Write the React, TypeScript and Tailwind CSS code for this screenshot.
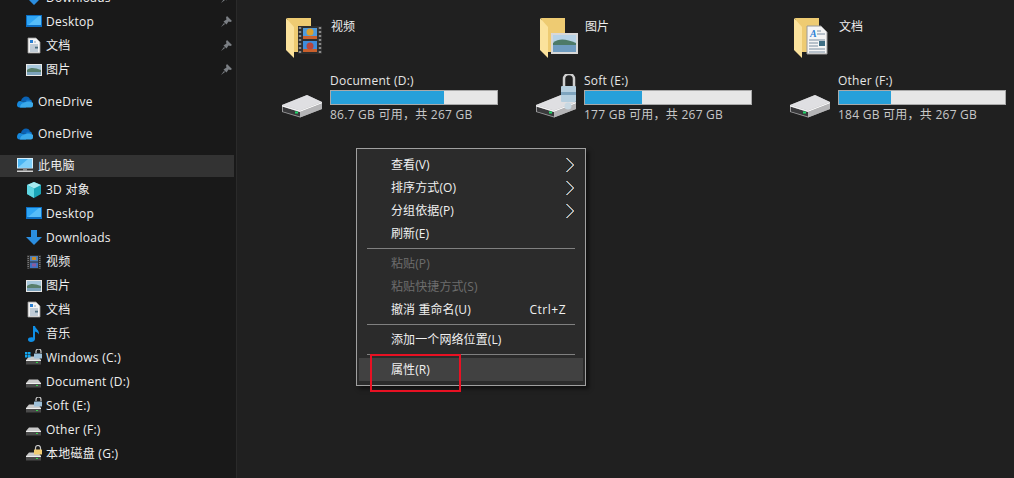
import type { ReactNode } from "react";

const DriveSmall = () => (
  <>
    <path d="M1 10 L4 6.5 H13 L16 10 V14 H1 Z" fill="#c9c9c9" />
    <path d="M1 10.5 H16 V14.5 H1 Z" fill="#4a4a4a" />
    <rect x="1" y="10" width="15" height="1" fill="#eeeeee" />
    <rect x="11" y="12" width="2" height="1" fill="#35d04a" />
  </>
);

const SmallLock = ({ color = "#9fc0d8", closed = false }: { color?: string; closed?: boolean }) => (
  <>
    <path
      d={closed ? "M10.5 5 V3 A2.5 2.5 0 0 1 15.5 3 V5" : "M11 4 V2.5 A2.5 2.5 0 0 1 16 2.5 V4"}
      fill="none"
      stroke="#c8c8c8"
      strokeWidth="1.2"
    />
    <rect x="9" y="4.5" width="8" height="5" rx="0.5" fill={color} />
  </>
);

const icons: Record<string, ReactNode> = {
  desktop: (
    <>
      <rect x="1" y="2" width="16" height="12" fill="#0c6fc4" />
      <rect x="2" y="3" width="14" height="9" fill="#2fa6f5" />
      <path d="M3 12 L14 3 H16 V12 Z" fill="#56bdf9" />
    </>
  ),
  doc: (
    <>
      <path d="M3 1 H11 L15 5 V16 H3 Z" fill="#f4f4f4" stroke="#9a9a9a" strokeWidth="0.8" />
      <rect x="5" y="3" width="3" height="3" fill="#2a7fd1" />
      <path d="M9 5 H11 M5 8 H13 M5 10 H10 M5 12 H13 M5 14 H13" stroke="#6f8ea8" strokeWidth="0.8" />
      <rect x="10" y="9.5" width="3" height="2" fill="#4a6d80" />
    </>
  ),
  picture: (
    <>
      <rect x="1" y="3" width="16" height="12" fill="#e8e8e8" />
      <rect x="2" y="4" width="14" height="10" fill="#a8c8dc" />
      <path d="M2 9 C6 6 10 7 16 9 V11 H2 Z" fill="#587f6c" />
      <rect x="2" y="11" width="14" height="3" fill="#7da3bc" />
    </>
  ),
  video: (
    <>
      <rect x="2" y="2" width="14" height="14" fill="#2f2f2f" />
      <rect x="5" y="3" width="8" height="5.5" fill="#4f7fb8" />
      <rect x="5" y="9.5" width="8" height="5.5" fill="#3f72c2" />
      <rect x="7" y="4" width="4" height="3" fill="#c48a2a" />
      <rect x="7" y="10.5" width="4" height="3" fill="#8c5a9c" />
      <path d="M3.2 3 V15.5 M14.8 3 V15.5" stroke="#8a8a8a" strokeWidth="1.2" strokeDasharray="1 1" />
    </>
  ),
  music: (
    <path
      d="M8 1 H10 C10.5 4 14.5 5 14 9.5 C13 7.5 11.5 7 10 6.5 V14 C10 16 8 17 6 17 C4 17 3 16 3 14.5 C3 13 5 12 8 12.5 Z"
      fill="#0f8fe6"
    />
  ),
  cube: (
    <>
      <path d="M9 1 L16 4 V13 L9 17 L2 13 V4 Z" fill="#1aa5b8" />
      <path d="M9 1 L16 4 L9 7.5 L2 4 Z" fill="#a8ecf2" />
      <path d="M2 4 L9 7.5 V17 L2 13 Z" fill="#5fd6e2" />
    </>
  ),
  download: <path d="M6 1 H12 V8 H17 L9 16 L1 8 H6 Z" fill="#2b8ee0" />,
  onedrive: (
    <>
      <path d="M4 8 C5 3 11 2 13 6 C11 7 9 8 8 9 Z" fill="#0a62b4" />
      <path d="M8 9 C10 5 15 6 15 9 L8 11 Z" fill="#0f75cc" />
      <path d="M3 8 C1 8 0 10 0 12 C0 13.5 1 14.5 2.5 14.5 H9 L8 9 Z" fill="#1688dc" />
      <path d="M7 10 C9 8 14 8 16 10 V12.5 C16 13.8 15 14.5 14 14.5 H3 C3 12 5 10 7 10 Z" fill="#3aa9ea" />
    </>
  ),
  pc: (
    <>
      <rect x="0" y="1" width="16" height="10.5" fill="#d7eefb" />
      <rect x="1" y="2" width="14" height="8.5" fill="#49b4f2" />
      <path d="M1 10.5 L11 2 H15 V10.5 Z" fill="#7fd0fa" />
      <rect x="6" y="11.5" width="4" height="2" fill="#8a8a8a" />
      <rect x="0" y="13.5" width="16" height="1.5" fill="#cfcfcf" />
    </>
  ),
  win: (
    <>
      <g transform="translate(0 1)">
        <DriveSmall />
      </g>
      <SmallLock />
      <path d="M0 3 H2.5 V5.5 H0 Z M3 3 H5.5 V5.5 H3 Z M0 6 H2.5 V8.5 H0 Z M3 6 H5.5 V8.5 H3 Z" fill="#12a5ee" />
    </>
  ),
  drive: <DriveSmall />,
  driveOpen: (
    <>
      <g transform="translate(0 1)">
        <DriveSmall />
      </g>
      <SmallLock />
    </>
  ),
  driveClosed: (
    <>
      <g transform="translate(0 1)">
        <DriveSmall />
      </g>
      <SmallLock color="#f1cd74" closed />
    </>
  ),
};

const Pin = () => (
  <svg viewBox="0 0 12 12" className="absolute right-[2px] top-[6px] h-3 w-3">
    <path d="M7 0 L12 5 L10.5 6 L8.5 5.5 L6.5 8.5 L3.5 5.5 L6.5 3.5 L6 1.5 Z M4 7 L1 11 L5 8 Z" fill="#7b7f84" />
  </svg>
);

const NavRow = ({
  icon,
  label,
  pinned,
  top,
  selected,
}: {
  icon: string;
  label: string;
  pinned?: boolean;
  top?: boolean;
  selected?: boolean;
}) => (
  <div className={`relative flex h-6 items-center ${top ? "pl-[17px]" : "pl-[25px]"}`}>
    {selected && <div className="absolute inset-x-0 bottom-[1px] top-[1px] bg-[#333333]" />}
    <svg viewBox="0 0 18 18" className="relative h-[18px] w-[18px] shrink-0">
      {icons[icon]}
    </svg>
    <span className="relative ml-[3px] text-xs tracking-[0.25px] text-[#efefef]">{label}</span>
    {pinned && <Pin />}
  </div>
);

const Sidebar = () => (
  <aside className="-mt-[14px] w-[234px] shrink-0 text-xs">
    <NavRow icon="download" label="Downloads" pinned />
    <NavRow icon="desktop" label="Desktop" pinned />
    <NavRow icon="doc" label="文档" pinned />
    <NavRow icon="picture" label="图片" pinned />
    <div className="mt-2">
      <NavRow icon="onedrive" label="OneDrive" top />
    </div>
    <div className="mt-2">
      <NavRow icon="onedrive" label="OneDrive" top />
    </div>
    <div className="mt-2">
      <NavRow icon="pc" label="此电脑" top selected />
    </div>
    <NavRow icon="cube" label="3D 对象" />
    <NavRow icon="desktop" label="Desktop" />
    <NavRow icon="download" label="Downloads" />
    <NavRow icon="video" label="视频" />
    <NavRow icon="picture" label="图片" />
    <NavRow icon="doc" label="文档" />
    <NavRow icon="music" label="音乐" />
    <NavRow icon="win" label="Windows (C:)" />
    <NavRow icon="drive" label="Document (D:)" />
    <NavRow icon="driveOpen" label="Soft (E:)" />
    <NavRow icon="drive" label="Other (F:)" />
    <NavRow icon="driveClosed" label="本地磁盘 (G:)" />
  </aside>
);

const overlays: Record<string, ReactNode> = {
  video: (
    <>
      <rect x="12" y="9" width="24" height="28" fill="#2e2e2e" />
      <path d="M14 10 V37 M34 10 V37" stroke="#8a8a8a" strokeWidth="2.4" strokeDasharray="2 2" />
      <rect x="17" y="11" width="14" height="11" fill="#4f9bdc" />
      <rect x="17" y="24" width="14" height="11" fill="#3f8ddc" />
      <rect x="17" y="19" width="14" height="3" fill="#c9602c" />
      <rect x="17" y="32" width="14" height="3" fill="#c9602c" />
      <circle cx="24" cy="15" r="3.5" fill="#dca02c" />
      <circle cx="24" cy="29" r="3.5" fill="#b8463c" />
    </>
  ),
  picture: (
    <>
      <rect x="11" y="16" width="27" height="21" fill="#d8d8d8" />
      <rect x="13" y="18" width="23" height="17" fill="#b7d3e6" />
      <path d="M13 26 C19 21 26 22 36 26 V28 H13 Z" fill="#4d7a68" />
      <rect x="13" y="28" width="23" height="7" fill="#6f9cc0" />
    </>
  ),
  doc: (
    <>
      <path d="M13 9 H27 L33 15 V37 H13 Z" fill="#f5f5f5" stroke="#9a9a9a" />
      <text x="16" y="20" fontSize="10" fontStyle="italic" fontWeight="700" fill="#2b7fd6" fontFamily="Liberation Serif, serif">
        A
      </text>
      <path d="M23 14 H27 M23 17 H31 M15 23 H31 M15 26 H24 M15 29 H24 M15 32 H31 M15 35 H31" stroke="#7a8ea0" />
      <rect x="25" y="24" width="6" height="5" fill="#3f6f85" />
    </>
  ),
};

const FolderIcon = ({ overlay }: { overlay: string }) => (
  <svg viewBox="0 0 38 42" className="h-[42px] w-[38px] shrink-0">
    <path d="M1 1 H25 V35 H8 Z" fill="#eecb72" />
    <path d="M0 1 L8 10 V41 L0 33 Z" fill="#fbe29c" />
    {overlays[overlay]}
  </svg>
);

const DriveIcon = ({ lock }: { lock?: boolean }) => (
  <svg viewBox="0 0 44 44" className="mb-[6px] h-[44px] w-[44px] shrink-0">
    <path d="M2 31 L27 21 L42 28 V35 L20 43.5 L2 38 Z" fill="#9b9b9d" />
    <path d="M2 31 L27 21 L42 28 L20 36.5 Z" fill="#dfdfe2" />
    <path d="M3 32.5 L20 38 V42.5 L3 37.5 Z" fill="#39393b" />
    <path d="M2 31 L20 36.5 L42 28 V29.5 L20 38 L2 32.5 Z" fill="#f4f4f5" />
    <path d="M20 38 L42 29.5 V35 L20 43.5 Z" fill="#b4b4b6" />
    <rect x="15" y="37.5" width="3" height="2" fill="#22d86a" />
    {lock && (
      <>
        <path d="M30 13 V5 A5 5 0 0 1 40 5 V13" fill="none" stroke="#d0d0d0" strokeWidth="2.5" />
        <rect x="27" y="12" width="15" height="16" rx="1" fill="#b6cfdf" />
        <rect x="27" y="18" width="15" height="3" fill="#7fa5bf" />
        <circle cx="34" cy="32" r="3.5" fill="#c8d8e2" />
      </>
    )}
  </svg>
);

const FolderTile = ({ name, overlay }: { name: string; overlay: string }) => (
  <div className="flex w-[254px] items-start">
    <FolderIcon overlay={overlay} />
    <span className="ml-[7px] mt-[2px] text-xs text-[#ededed]">{name}</span>
  </div>
);

const DriveTile = ({
  name,
  free,
  used,
  lock,
}: {
  name: string;
  free: string;
  used: number;
  lock?: boolean;
}) => (
  <div className="flex w-[254px] items-end">
    <DriveIcon lock={lock} />
    <div className="ml-[6px] w-[168px]">
      <div className="text-xs leading-[18px] tracking-[0.25px] text-[#e6e6e6]">{name}</div>
      <div className="h-[15px] border border-[#a9a9a9] bg-[#e6e6e6]">
        <div className="h-full bg-[#26a0da]" style={{ width: `${used}%` }} />
      </div>
      <div className="text-xs leading-[19px] tracking-[0.25px] text-[#c8c8c8]">{free}</div>
    </div>
  </div>
);

const MenuItem = ({
  label,
  disabled,
  arrow,
  hint,
  active,
}: {
  label: string;
  disabled?: boolean;
  arrow?: boolean;
  hint?: string;
  active?: boolean;
}) => (
  <div
    className={`mx-[2px] flex h-[23px] items-center justify-between pl-[32px] pr-[17px] text-xs tracking-[0.1px] ${
      disabled ? "text-[#6d6d6d]" : "text-[#f0f0f0]"
    } ${active ? "bg-[#414141]" : ""}`}
  >
    <span>{label}</span>
    {hint && <span className="tracking-[0.5px]">{hint}</span>}
    {arrow && (
      <svg viewBox="0 0 10 16" className="-mr-[9px] h-4 w-[10px]">
        <path d="M1 1 L8 8 L1 15" fill="none" stroke="#3a9ad9" />
        <path d="M2 1 L9 8 L2 15" fill="none" stroke="#e0934a" />
        <path d="M1.5 1 L8.5 8 L1.5 15" fill="none" stroke="#e4e4e4" strokeWidth="0.7" />
      </svg>
    )}
  </div>
);

const Separator = () => <div className="mx-[10px] my-[3px] h-[1px] bg-[#808080]" />;

const ContextMenu = () => (
  <div className="absolute left-[356px] top-[148px] w-[230px] border border-[#a0a0a0] bg-[#2b2b2b] py-[4px] shadow-[3px_3px_4px_rgba(0,0,0,0.5)]">
    <MenuItem label="查看(V)" arrow />
    <MenuItem label="排序方式(O)" arrow />
    <MenuItem label="分组依据(P)" arrow />
    <MenuItem label="刷新(E)" />
    <Separator />
    <MenuItem label="粘贴(P)" disabled />
    <MenuItem label="粘贴快捷方式(S)" disabled />
    <MenuItem label="撤消 重命名(U)" hint="Ctrl+Z" />
    <Separator />
    <MenuItem label="添加一个网络位置(L)" />
    <Separator />
    <MenuItem label="属性(R)" active />
  </div>
);

export default function App() {
  return (
    <div className="relative flex h-[478px] w-[1014px] overflow-hidden bg-[#191919] font-['Open_Sans','Noto_Sans_CJK_SC',sans-serif]">
      <Sidebar />
      <main className="ml-[2px] flex-1 border-l border-[#2a2a2a] bg-[#202020] pl-[49px] pt-[17px]">
        <div className="flex">
          <FolderTile name="视频" overlay="video" />
          <FolderTile name="图片" overlay="picture" />
          <FolderTile name="文档" overlay="doc" />
        </div>
        <div className="-ml-[6px] mt-[13px] flex">
          <DriveTile name="Document (D:)" free="86.7 GB 可用，共 267 GB" used={68} />
          <DriveTile name="Soft (E:)" free="177 GB 可用，共 267 GB" used={34.5} lock />
          <DriveTile name="Other (F:)" free="184 GB 可用，共 267 GB" used={31.5} />
        </div>
      </main>
      <ContextMenu />
      <div className="absolute left-[370px] top-[354px] h-[38px] w-[91px] border-2 border-[#e81123]" />
    </div>
  );
}
